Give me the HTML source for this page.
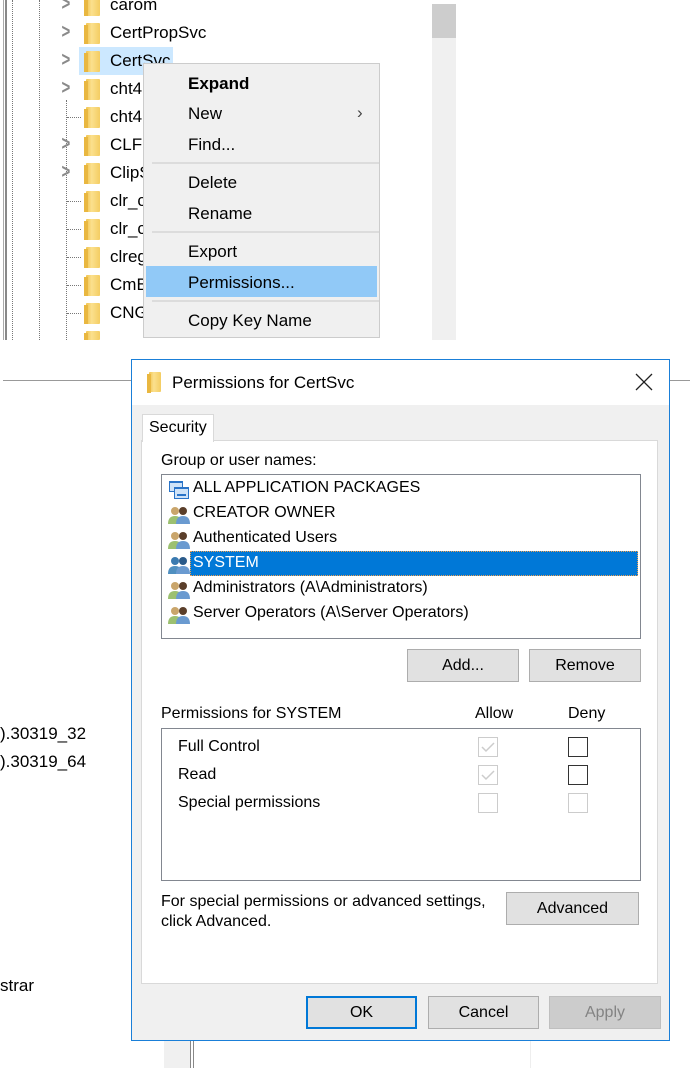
<!DOCTYPE html>
<html><head><meta charset="utf-8">
<style>
*{margin:0;padding:0;box-sizing:border-box}
body{width:693px;height:1068px;background:#fff;position:relative;overflow:hidden;font-family:"Liberation Sans",sans-serif;color:#000}
.a{position:absolute}
.t{position:absolute;font-size:17px;white-space:nowrap}
.fold{position:absolute;width:14px;height:21px;background:linear-gradient(90deg,#f0c34d,#fbe08e 40%,#f4cd62);border-radius:1px}
.fold:before{content:"";position:absolute;left:-2px;top:2px;width:4px;height:19px;background:#e9b740}
.chev{position:absolute;font-size:20px;color:#8a8a8a;font-weight:bold;transform:scaleX(.75)}
.dot{position:absolute;border-top:1px dotted #777;width:14px}
.vd{position:absolute;border-left:1px dotted #777}
.mi{position:absolute;left:44px;font-size:17px}
.sep{position:absolute;left:8px;width:227px;height:2px;background:#dcdcdc}
.dt{position:absolute;font-size:16px;white-space:nowrap}
.btn{position:absolute;background:#e1e1e1;border:1px solid #adadad;font-size:16px;text-align:center}
.cb{position:absolute;width:20px;height:20px;border:1px solid #ccc;background:#fff}
.cbd{border-color:#333}
.ui{position:absolute;left:6px;width:22px;height:20px}
</style></head><body>
<div class="a" style="left:3px;top:0;width:1px;height:340px;background:#aaa"></div>
<div class="a" style="left:5px;top:0;width:2px;height:340px;background:#888"></div>
<div class="vd" style="left:12px;top:0;height:340px"></div>
<div class="vd" style="left:39px;top:0;height:340px"></div>
<div class="vd" style="left:66px;top:100px;height:240px"></div>

<div class="chev" style="left:60px;top:-7px">&gt;</div>
<div class="chev" style="left:60px;top:21px">&gt;</div>
<div class="chev" style="left:60px;top:49px">&gt;</div>
<div class="chev" style="left:60px;top:77px">&gt;</div>
<div class="chev" style="left:60px;top:133px">&gt;</div>
<div class="chev" style="left:60px;top:161px">&gt;</div>
<div class="dot" style="left:67px;top:117px"></div>
<div class="dot" style="left:67px;top:201px"></div>
<div class="dot" style="left:67px;top:229px"></div>
<div class="dot" style="left:67px;top:257px"></div>
<div class="dot" style="left:67px;top:285px"></div>
<div class="dot" style="left:67px;top:313px"></div>

<div class="a" style="left:79px;top:47px;width:94px;height:28px;background:#cce8ff"></div>
<div class="fold" style="left:86px;top:-5px"></div>
<div class="fold" style="left:86px;top:23px"></div>
<div class="fold" style="left:86px;top:51px"></div>
<div class="fold" style="left:86px;top:79px"></div>
<div class="fold" style="left:86px;top:107px"></div>
<div class="fold" style="left:86px;top:135px"></div>
<div class="fold" style="left:86px;top:163px"></div>
<div class="fold" style="left:86px;top:191px"></div>
<div class="fold" style="left:86px;top:219px"></div>
<div class="fold" style="left:86px;top:247px"></div>
<div class="fold" style="left:86px;top:275px"></div>
<div class="fold" style="left:86px;top:303px"></div>
<div class="fold" style="left:86px;top:331px;height:9px"></div>
<div class="t" style="left:110px;top:-5px">carom</div>
<div class="t" style="left:110px;top:23px">CertPropSvc</div>
<div class="t" style="left:110px;top:51px">CertSvc</div>
<div class="t" style="left:110px;top:79px">cht4</div>
<div class="t" style="left:110px;top:107px">cht4</div>
<div class="t" style="left:110px;top:135px">CLFS</div>
<div class="t" style="left:110px;top:163px">ClipS</div>
<div class="t" style="left:110px;top:191px">clr_c</div>
<div class="t" style="left:110px;top:219px">clr_c</div>
<div class="t" style="left:110px;top:247px">clreg</div>
<div class="t" style="left:110px;top:275px">CmB</div>
<div class="t" style="left:110px;top:303px">CNG</div>
<div class="a" style="left:0;top:340px;width:460px;height:20px;background:#fff"></div>

<div class="a" style="left:432px;top:4px;width:24px;height:336px;background:#f0f0f0"></div>
<div class="a" style="left:432px;top:4px;width:24px;height:34px;background:#cdcdcd"></div>

<div class="a" style="left:143px;top:63px;width:237px;height:275px;background:#f0f0f0;border:1px solid #ccc">
<div class="mi" style="top:10px;font-weight:bold">Expand</div>
<div class="mi" style="top:40px">New</div>
<div class="a" style="left:213px;top:39px;font-size:17px;color:#444">&rsaquo;</div>
<div class="mi" style="top:71px">Find...</div>
<div class="sep" style="top:98px"></div>
<div class="mi" style="top:109px">Delete</div>
<div class="mi" style="top:140px">Rename</div>
<div class="sep" style="top:167px"></div>
<div class="mi" style="top:178px">Export</div>
<div class="a" style="left:2px;top:202px;width:231px;height:31px;background:#91c9f7"></div>
<div class="mi" style="top:209px">Permissions...</div>
<div class="sep" style="top:236px"></div>
<div class="mi" style="top:247px">Copy Key Name</div>
</div>

<div class="a" style="left:3px;top:380px;width:128px;height:1px;background:#999"></div>
<div class="a" style="left:670px;top:380px;width:20px;height:1px;background:#999"></div>
<div class="t" style="left:0;top:724px">).30319_32</div>
<div class="t" style="left:0;top:752px">).30319_64</div>
<div class="t" style="left:0;top:976px">strar</div>
<div class="a" style="left:164px;top:1041px;width:26px;height:27px;background:#f0f0f0"></div>
<div class="a" style="left:190px;top:1041px;width:1px;height:27px;background:#888"></div>
<div class="a" style="left:193px;top:1041px;width:1px;height:27px;background:#888"></div>
<div class="a" style="left:530px;top:1041px;width:1px;height:27px;background:#eee"></div>

<div class="a" style="left:131px;top:359px;width:539px;height:682px;border:1px solid #1a7fd8;background:#f0f0f0">
<div class="a" style="left:0;top:0;width:537px;height:45px;background:#fff"></div>
<div class="fold" style="left:17px;top:12px;width:12px;height:20px"></div>
<div class="a" style="left:40px;top:13px;font-size:17px">Permissions for CertSvc</div>
<svg class="a" style="left:503px;top:13px" width="18" height="18"><path d="M1 1L17 17M17 1L1 17" stroke="#222" stroke-width="1.3"/></svg>
<div class="a" style="left:10px;top:54px;width:72px;height:28px;background:#fff;border:1px solid #d9d9d9;border-bottom:none;z-index:2"></div>
<div class="dt" style="left:17px;top:59px;z-index:3">Security</div>
<div class="a" style="left:9px;top:80px;width:517px;height:544px;background:#fff;border:1px solid #d9d9d9"></div>
<div class="dt" style="left:29px;top:92px">Group or user names:</div>
<div class="a" style="left:29px;top:114px;width:480px;height:165px;border:1px solid #828790;background:#fff">
 <svg class="ui" style="top:5px" viewBox="0 0 22 20"><rect x="1" y="1" width="14" height="11" fill="#2a74c8"/><rect x="2" y="3" width="12" height="8" fill="#cfe3f8"/><rect x="6" y="7" width="15" height="12" fill="#2a74c8"/><rect x="7" y="9" width="13" height="9" fill="#cfe3f8"/><rect x="9" y="14" width="9" height="2" fill="#2a74c8"/></svg>
 <div class="dt" style="left:31px;top:4px">ALL APPLICATION PACKAGES</div>
 <svg class="ui" style="top:30px" viewBox="0 0 22 20"><circle cx="7" cy="6" r="4" fill="#c9a56b"/><path d="M0 19q0-8 7-8t7 8z" fill="#9cc070"/><circle cx="15" cy="6" r="4" fill="#5a3e2a"/><path d="M8 19q0-8 7-8t7 8z" fill="#6a9ad0"/></svg>
 <div class="dt" style="left:31px;top:29px">CREATOR OWNER</div>
 <svg class="ui" style="top:55px" viewBox="0 0 22 20"><circle cx="7" cy="6" r="4" fill="#c9a56b"/><path d="M0 19q0-8 7-8t7 8z" fill="#9cc070"/><circle cx="15" cy="6" r="4" fill="#5a3e2a"/><path d="M8 19q0-8 7-8t7 8z" fill="#6a9ad0"/></svg>
 <div class="dt" style="left:31px;top:54px">Authenticated Users</div>
 <div class="a" style="left:28px;top:76px;width:448px;height:25px;background:#0078d7;border:1px dotted #f0a050"></div>
 <svg class="ui" style="top:80px" viewBox="0 0 22 20"><circle cx="7" cy="6" r="4" fill="#3a7ab0"/><path d="M0 19q0-8 7-8t7 8z" fill="#4f8fc0"/><circle cx="15" cy="6" r="4" fill="#2a5a8a"/><path d="M8 19q0-8 7-8t7 8z" fill="#6a9ad0"/></svg>
 <div class="dt" style="left:31px;top:79px;color:#fff">SYSTEM</div>
 <svg class="ui" style="top:105px" viewBox="0 0 22 20"><circle cx="7" cy="6" r="4" fill="#c9a56b"/><path d="M0 19q0-8 7-8t7 8z" fill="#9cc070"/><circle cx="15" cy="6" r="4" fill="#5a3e2a"/><path d="M8 19q0-8 7-8t7 8z" fill="#6a9ad0"/></svg>
 <div class="dt" style="left:31px;top:104px">Administrators (A\Administrators)</div>
 <svg class="ui" style="top:130px" viewBox="0 0 22 20"><circle cx="7" cy="6" r="4" fill="#c9a56b"/><path d="M0 19q0-8 7-8t7 8z" fill="#9cc070"/><circle cx="15" cy="6" r="4" fill="#5a3e2a"/><path d="M8 19q0-8 7-8t7 8z" fill="#6a9ad0"/></svg>
 <div class="dt" style="left:31px;top:129px">Server Operators (A\Server Operators)</div>
</div>
<div class="btn" style="left:275px;top:289px;width:112px;height:33px;line-height:31px">Add...</div>
<div class="btn" style="left:397px;top:289px;width:112px;height:33px;line-height:31px">Remove</div>
<div class="dt" style="left:29px;top:345px">Permissions for SYSTEM</div>
<div class="dt" style="left:343px;top:345px">Allow</div>
<div class="dt" style="left:436px;top:345px">Deny</div>
<div class="a" style="left:29px;top:368px;width:480px;height:153px;border:1px solid #828790;background:#fff"></div>
<div class="dt" style="left:46px;top:378px">Full Control</div>
<div class="dt" style="left:46px;top:406px">Read</div>
<div class="dt" style="left:46px;top:434px">Special permissions</div>
<div class="cb" style="left:346px;top:377px"><svg width="18" height="18"><path d="M3 9l4 4 8-8" stroke="#ccc" stroke-width="1.5" fill="none"/></svg></div>
<div class="cb" style="left:346px;top:405px"><svg width="18" height="18"><path d="M3 9l4 4 8-8" stroke="#ccc" stroke-width="1.5" fill="none"/></svg></div>
<div class="cb" style="left:346px;top:433px"></div>
<div class="cb cbd" style="left:436px;top:377px"></div>
<div class="cb cbd" style="left:436px;top:405px"></div>
<div class="cb" style="left:436px;top:433px"></div>
<div class="dt" style="left:29px;top:532px;line-height:20px">For special permissions or advanced settings,<br>click Advanced.</div>
<div class="btn" style="left:374px;top:532px;width:133px;height:33px;line-height:31px">Advanced</div>
<div class="btn" style="left:174px;top:636px;width:111px;height:33px;line-height:29px;border:2px solid #0078d7">OK</div>
<div class="btn" style="left:296px;top:636px;width:111px;height:33px;line-height:31px">Cancel</div>
<div class="btn" style="left:417px;top:636px;width:112px;height:33px;line-height:31px;background:#ccc;border-color:#bfbfbf;color:#838383">Apply</div>
</div>
</body></html>
